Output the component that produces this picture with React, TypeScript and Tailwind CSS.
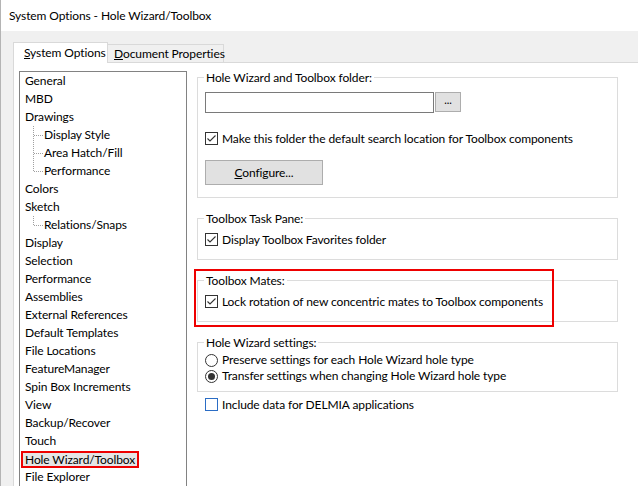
import React from 'react';

const font = { fontFamily: 'Lato, "Noto Sans", sans-serif' };

type Item = { label: string; child?: boolean; last?: boolean; selected?: boolean };

const items: Item[] = [
  { label: 'General' },
  { label: 'MBD' },
  { label: 'Drawings' },
  { label: 'Display Style', child: true },
  { label: 'Area Hatch/Fill', child: true },
  { label: 'Performance', child: true, last: true },
  { label: 'Colors' },
  { label: 'Sketch' },
  { label: 'Relations/Snaps', child: true, last: true },
  { label: 'Display' },
  { label: 'Selection' },
  { label: 'Performance' },
  { label: 'Assemblies' },
  { label: 'External References' },
  { label: 'Default Templates' },
  { label: 'File Locations' },
  { label: 'FeatureManager' },
  { label: 'Spin Box Increments' },
  { label: 'View' },
  { label: 'Backup/Recover' },
  { label: 'Touch' },
  { label: 'Hole Wizard/Toolbox', selected: true },
  { label: 'File Explorer' },
];

function TreeLines({ last }: { last?: boolean }) {
  return (
    <svg width="11" height="18" className="shrink-0">
      <line x1="0.5" y1="0" x2="0.5" y2={last ? 9 : 18} stroke="#a0a0a0" strokeDasharray="1 1" />
      <line x1="1" y1="9.5" x2="10" y2="9.5" stroke="#a0a0a0" strokeDasharray="1 1" />
    </svg>
  );
}

function Check({ checked, focus }: { checked?: boolean; focus?: boolean }) {
  return (
    <span
      className={
        'flex h-[13px] w-[13px] shrink-0 items-center justify-center border bg-white ' +
        (focus ? 'border-[#2b6dc5]' : 'border-[#333333]')
      }
    >
      {checked && (
        <svg width="11" height="11" viewBox="0 0 11 11">
          <polyline points="1.5,5.5 4,8 9.5,2.5" fill="none" stroke="#333333" strokeWidth="1.1" />
        </svg>
      )}
    </span>
  );
}

function Radio({ on }: { on?: boolean }) {
  return (
    <span className="flex h-[13px] w-[13px] shrink-0 items-center justify-center rounded-full border border-[#333333] bg-white">
      {on && <span className="h-[7px] w-[7px] rounded-full bg-[#333333]" />}
    </span>
  );
}

function Group({ title, children, className = '' }: { title: string; children: React.ReactNode; className?: string }) {
  return (
    <fieldset className={'m-0 border border-[#dcdcdc] p-0 ' + className}>
      <legend className="ml-[6px] px-[2px] leading-[15px]">{title}</legend>
      {children}
    </fieldset>
  );
}

export default function App() {
  return (
    <div className="h-[486px] w-[638px] overflow-hidden whitespace-nowrap border-l border-[#b4b4b4] bg-[#f0f0f0] text-[12px] tracking-[-0.1px] text-black" style={font}>
      <div className="flex h-[31px] items-center bg-white pl-[8px]">System Options - Hole Wizard/Toolbox</div>

      {/* tabs */}
      <div className="ml-[12px] mt-[11px] flex items-end">
        <div className="relative z-10 -mb-px flex h-[21px] w-[95px] shrink-0 items-start border border-b-0 border-[#d9d9d9] bg-white pl-[10px] pt-[1px] leading-[17px]">
          <span><u>S</u>ystem Options</span>
        </div>
        <div className="flex h-[18px] w-[116px] shrink-0 items-center border border-l-0 border-b-0 border-[#d9d9d9] pl-[6px] leading-[17px]">
          <span><u>D</u>ocument Properties</span>
        </div>
      </div>

      <div className="ml-[12px] flex h-[500px] border-l border-t border-[#d9d9d9] bg-white pl-[5px] pt-[7px]">
        {/* tree list */}
        <div className="mt-[1px] w-[168px] shrink-0 border border-[#828282] bg-white">
          {items.map((it, i) =>
            it.selected ? (
              <div key={i} className="flex h-[18px] items-center pl-[1px]">
                <span className="h-[17px] border-2 border-[#ee0000] bg-[#e5e5e5] px-[2px] leading-[13px]">{it.label}</span>
              </div>
            ) : it.child ? (
              <div key={i} className="flex h-[18px] items-center pl-[13px]">
                <TreeLines last={it.last} />
                <span>{it.label}</span>
              </div>
            ) : (
              <div key={i} className="flex h-[18px] items-center pl-[5px]">
                {it.label}
              </div>
            )
          )}
        </div>

        {/* settings */}
        <div className="ml-[10px] flex w-[421px] shrink-0 flex-col">
          <Group title="Hole Wizard and Toolbox folder:">
            <div className="px-[7px] pb-[12px] pt-[7px]">
              <div className="flex">
                <div className="h-[21px] w-[229px] border border-[#7a7a7a] bg-white" />
                <div className="ml-[1px] flex h-[20px] w-[26px] items-center justify-center border border-[#adadad] bg-[#e1e1e1] pb-[3px] text-[11px]">
                  ...
                </div>
              </div>
              <div className="mt-[18px] flex h-[15px] items-center gap-[4px]">
                <Check checked />
                <span>Make this folder the default search location for Toolbox components</span>
              </div>
              <div className="mt-[14px] flex h-[25px] w-[118px] items-center justify-center border border-[#adadad] bg-[#e1e1e1]">
                <span><u>C</u>onfigure...</span>
              </div>
            </div>
          </Group>

          <Group title="Toolbox Task Pane:" className="mt-[13px]">
            <div className="px-[7px] pb-[12px] pt-[6px]">
              <div className="flex h-[15px] items-center gap-[4px]">
                <Check checked />
                <span>Display Toolbox Favorites folder</span>
              </div>
            </div>
          </Group>

          <div className="relative mt-[13px]">
            <Group title="Toolbox Mates:">
              <div className="px-[7px] pb-[12px] pt-[6px]">
                <div className="flex h-[15px] items-center gap-[4px]">
                  <Check checked />
                  <span>Lock rotation of new concentric mates to Toolbox components</span>
                </div>
              </div>
            </Group>
            <div className="pointer-events-none absolute -left-[3px] -top-[4px] h-[58px] w-[360px] border-2 border-[#ee0000]" />
          </div>

          <Group title="Hole Wizard settings:" className="mt-[13px]">
            <div className="px-[7px] pb-[7px] pt-[2px]">
              <div className="flex h-[16px] items-center gap-[4px]">
                <Radio />
                <span>Preserve settings for each Hole Wizard hole type</span>
              </div>
              <div className="flex h-[16px] items-center gap-[4px]">
                <Radio on />
                <span>Transfer settings when changing Hole Wizard hole type</span>
              </div>
            </div>
          </Group>

          <div className="ml-[8px] mt-[5px] flex h-[15px] items-center gap-[4px]">
            <Check focus />
            <span>Include data for DELMIA applications</span>
          </div>
        </div>
      </div>
    </div>
  );
}
